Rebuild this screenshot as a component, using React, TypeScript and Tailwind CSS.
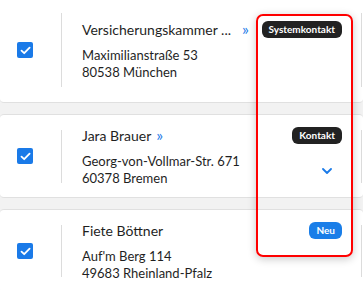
type Contact = {
  name: string
  street: string
  city: string
  badge: { label: string; tone: 'dark' | 'blue' }
  link?: boolean
  expandable?: boolean
}

const CONTACTS: Contact[] = [
  {
    name: 'Versicherungskammer ...',
    street: 'Maximilianstraße 53',
    city: '80538 München',
    badge: { label: 'Systemkontakt', tone: 'dark' },
    link: true,
  },
  {
    name: 'Jara Brauer',
    street: 'Georg-von-Vollmar-Str. 671',
    city: '60378 Bremen',
    badge: { label: 'Kontakt', tone: 'dark' },
    link: true,
    expandable: true,
  },
  {
    name: 'Fiete Böttner',
    street: "Auf'm Berg 114",
    city: '49683 Rheinland-Pfalz',
    badge: { label: 'Neu', tone: 'blue' },
  },
]

function Checkbox() {
  return (
    <div className="w-4 h-4 rounded-[2px] bg-[#1a7ae8] flex items-center justify-center">
      <svg width="11" height="9" viewBox="0 0 11 9" fill="none">
        <path d="M1.5 4.6 4.2 7.2 9.6 1.6" stroke="white" strokeWidth="1.8" strokeLinecap="round" strokeLinejoin="round" />
      </svg>
    </div>
  )
}

function Badge({ label, tone }: Contact['badge']) {
  return (
    <span
      className={`h-[17px] px-[7px] rounded-[6px] text-[10px] font-bold leading-[17px] text-white ${
        tone === 'dark' ? 'bg-[#222222]' : 'bg-[#1a7ee8]'
      }`}
    >
      {label}
    </span>
  )
}

function Card({
  contact,
  outerClass,
  dividerClass,
  badgeTop,
}: {
  contact: Contact
  outerClass: string
  dividerClass: string
  badgeTop: string
}) {
  return (
    <div className={`bg-white flex items-center shrink-0 ${outerClass}`}>
      <div className="w-[61px] pl-[17px]">
        <Checkbox />
      </div>
      <div className={`w-px bg-[#dcdcdc] ${dividerClass}`} />
      <div className="flex-1 pl-[20px] min-w-0 text-[#1f1f1f]">
        <p className="text-[14px] leading-[20px] whitespace-nowrap">
          {contact.name}
          {contact.link && (
            <span
              className={`text-[16px] leading-[20px] text-[#1a7ae8] ${
                contact.name.endsWith('...') ? 'ml-[11px]' : 'ml-[5px]'
              }`}
            >
              »
            </span>
          )}
        </p>
        <p className="mt-[7px] text-[13px] leading-[17px] whitespace-nowrap">{contact.street}</p>
        <p className="text-[13px] leading-[17px] whitespace-nowrap">{contact.city}</p>
      </div>
      <div className={`self-start flex flex-col items-end pr-[19px] ${badgeTop}`}>
        <Badge {...contact.badge} />
        {contact.expandable && (
          <svg className="mt-[24px] mr-[10px]" width="10" height="6" viewBox="0 0 10 6" fill="none">
            <path d="M1 1 5 5 9 1" stroke="#1a7ae8" strokeWidth="1.8" strokeLinecap="round" strokeLinejoin="round" />
          </svg>
        )}
      </div>
      <div className={`w-px bg-[#dcdcdc] ${dividerClass}`} />
      <div className="w-px" />
    </div>
  )
}

export default function App() {
  return (
    <div
      className="relative w-[363px] h-[290px] overflow-hidden bg-[#f2f2f2]"
      style={{ fontFamily: 'Lato, "Noto Sans", sans-serif' }}
    >
      <div className="flex flex-col gap-[11px]">
        <Card
          contact={CONTACTS[0]}
          outerClass="h-[103px] pb-[2px] border-b border-[#e0e0e0] rounded-b-[4px]"
          dividerClass="h-[74px]"
          badgeTop="pt-[21px]"
        />
        <Card
          contact={CONTACTS[1]}
          outerClass="h-[84px] border-y border-[#e0e0e0] rounded-[4px]"
          dividerClass="h-[53px]"
          badgeTop="pt-[12px]"
        />
        <Card
          contact={CONTACTS[2]}
          outerClass="h-[84px] border-y border-[#e0e0e0] rounded-[4px]"
          dividerClass="h-[52px]"
          badgeTop="pt-[12px]"
        />
      </div>
      <div className="absolute left-[256px] top-[14px] w-[97px] h-[243px] rounded-[7px] border-2 border-[#ff0000] shadow-[0_2px_8px_rgba(0,0,0,0.22)]" />
    </div>
  )
}
